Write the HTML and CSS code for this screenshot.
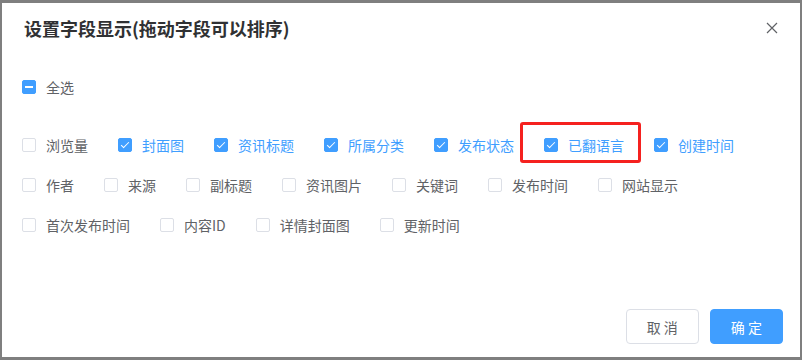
FILE: index.html
```html
<!DOCTYPE html>
<html lang="zh-CN">
<head>
    <meta charset="UTF-8">
    <title>设置字段显示</title>
    <link rel="stylesheet" href="styles.css">
</head>
<body>
    <div class="dialog">
        <div class="dialog-header">
            <span class="dialog-title">设置字段显示(拖动字段可以排序)</span>
        </div>
        <button class="dialog-close" aria-label="关闭">
            <svg width="12" height="12" viewBox="0 0 12 12">
                <path d="M1 1 L11 11 M11 1 L1 11" stroke="#606266" stroke-width="1.2" fill="none"/>
            </svg>
        </button>

        <div class="dialog-body">
            <label class="check-item is-indeterminate">
                <span class="check-box"></span>
                <span class="check-label">全选</span>
            </label>

            <div class="field-list">
                <label class="check-item"><span class="check-box"></span><span class="check-label">浏览量</span></label>
                <label class="check-item is-checked"><span class="check-box"></span><span class="check-label">封面图</span></label>
                <label class="check-item is-checked"><span class="check-box"></span><span class="check-label">资讯标题</span></label>
                <label class="check-item is-checked"><span class="check-box"></span><span class="check-label">所属分类</span></label>
                <label class="check-item is-checked"><span class="check-box"></span><span class="check-label">发布状态</span></label>
                <label class="check-item is-checked marked"><span class="check-box"></span><span class="check-label">已翻语言</span></label>
                <label class="check-item is-checked"><span class="check-box"></span><span class="check-label">创建时间</span></label>
                <label class="check-item"><span class="check-box"></span><span class="check-label">作者</span></label>
                <label class="check-item"><span class="check-box"></span><span class="check-label">来源</span></label>
                <label class="check-item"><span class="check-box"></span><span class="check-label">副标题</span></label>
                <label class="check-item"><span class="check-box"></span><span class="check-label">资讯图片</span></label>
                <label class="check-item"><span class="check-box"></span><span class="check-label">关键词</span></label>
                <label class="check-item"><span class="check-box"></span><span class="check-label">发布时间</span></label>
                <label class="check-item"><span class="check-box"></span><span class="check-label">网站显示</span></label>
                <label class="check-item"><span class="check-box"></span><span class="check-label">首次发布时间</span></label>
                <label class="check-item"><span class="check-box"></span><span class="check-label">内容ID</span></label>
                <label class="check-item"><span class="check-box"></span><span class="check-label">详情封面图</span></label>
                <label class="check-item"><span class="check-box"></span><span class="check-label">更新时间</span></label>
            </div>
        </div>

        <div class="dialog-footer">
            <button class="btn">取 消</button>
            <button class="btn btn-primary">确 定</button>
        </div>
    </div>
</body>
</html>
```

FILE: styles.css
```css
body {
    margin: 0;
    padding: 3px 2px 3px 2px;
    background-color: #7f7f7f;
    font-family: "Noto Sans CJK SC", "Noto Sans", sans-serif;
    height: 360px;
    box-sizing: border-box;
    overflow: hidden;
}

.dialog {
    position: relative;
    width: 798px;
    height: 354px;
    background-color: #fff;
    display: flex;
    flex-direction: column;
}

.dialog-header {
    padding: 13px 22px 0;
}

.dialog-title {
    display: block;
    font-size: 18px;
    line-height: 24px;
    font-weight: bold;
    color: #303133;
}

.dialog-close {
    position: absolute;
    top: 19px;
    right: 22px;
    width: 12px;
    height: 12px;
    padding: 0;
    border: none;
    background: none;
    display: flex;
    cursor: pointer;
}

.dialog-body {
    flex: 1;
    padding: 37px 20px 0;
}

.field-list {
    display: flex;
    flex-wrap: wrap;
    row-gap: 20px;
    margin-top: 38px;
    width: 760px;
}

.check-item {
    position: relative;
    display: flex;
    align-items: center;
    height: 20px;
    margin-right: 30px;
    font-size: 14px;
    color: #606266;
    cursor: pointer;
}

.check-box {
    position: relative;
    width: 14px;
    height: 14px;
    box-sizing: border-box;
    border: 1px solid #dcdfe6;
    border-radius: 2px;
    background-color: #fff;
}

.check-label {
    padding-left: 10px;
    line-height: 20px;
}

.is-checked .check-box,
.is-indeterminate .check-box {
    background-color: #409eff;
    border-color: #409eff;
}

.is-checked .check-label {
    color: #409eff;
}

.is-checked .check-box::after {
    content: "";
    position: absolute;
    left: 4px;
    top: 1px;
    width: 3px;
    height: 7px;
    border: 1px solid #fff;
    border-left: 0;
    border-top: 0;
    transform: rotate(45deg);
}

.is-indeterminate .check-box::after {
    content: "";
    position: absolute;
    left: 2px;
    right: 2px;
    top: 5px;
    height: 2px;
    background-color: #fff;
}

.marked::before {
    content: "";
    position: absolute;
    left: -24px;
    top: -13px;
    width: 121px;
    height: 41px;
    box-sizing: border-box;
    border: 3px solid #f5211f;
    border-radius: 3px;
}

.dialog-footer {
    display: flex;
    justify-content: flex-end;
    padding: 0 17px 13px;
}

.btn {
    height: 35px;
    padding: 0 20px;
    border: 1px solid #dcdfe6;
    border-radius: 4px;
    background-color: #fff;
    color: #606266;
    font-family: "Noto Sans CJK SC", sans-serif;
    font-size: 14px;
    cursor: pointer;
}

.btn-primary {
    margin-left: 11px;
    background-color: #409eff;
    border-color: #409eff;
    color: #fff;
}
```
